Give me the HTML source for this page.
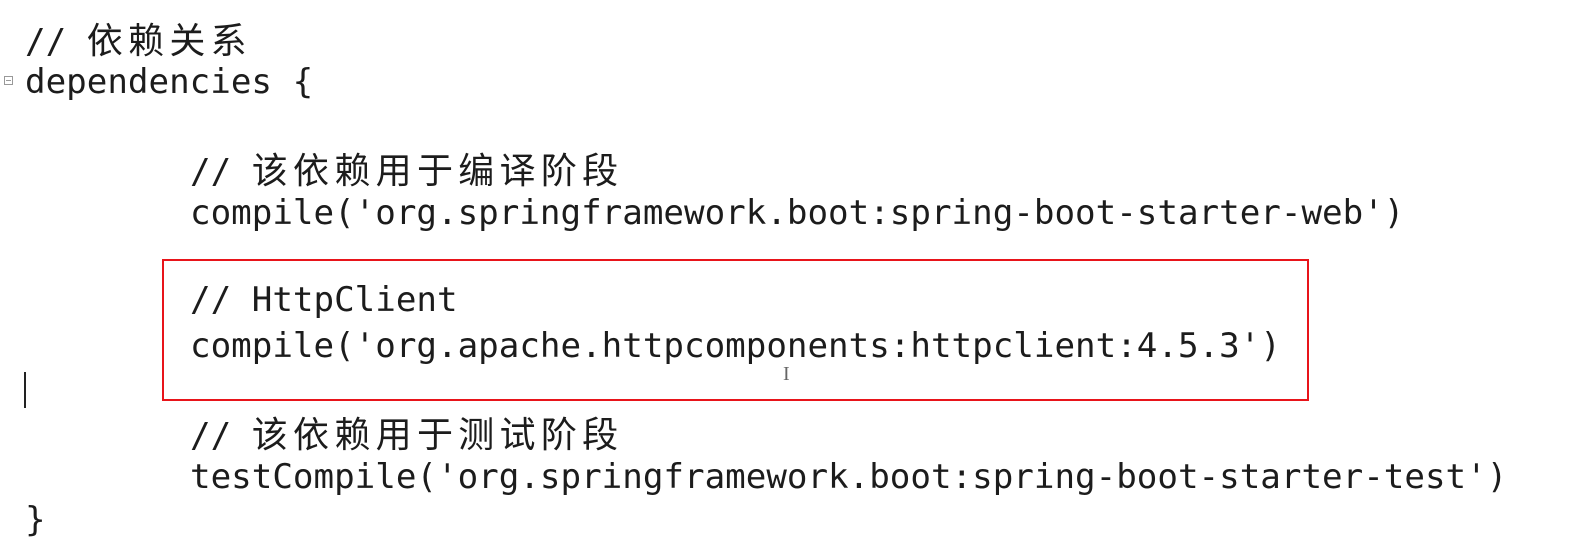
<!DOCTYPE html>
<html><head><meta charset="utf-8"><style>
html,body{margin:0;padding:0;background:#fff;width:1570px;height:545px;overflow:hidden;position:relative}
.l{position:absolute;white-space:pre;font-family:"DejaVu Sans Mono","Noto Sans CJK SC",monospace;font-size:34.2px;line-height:44px;height:44px;color:#1c1c1c}
.c{font-family:"Noto Sans CJK SC",sans-serif;letter-spacing:5.3px;font-size:36px}
.box{position:absolute;left:162px;top:259px;width:1143px;height:138px;border:2px solid #e8141a}
.cur{position:absolute;left:24px;top:372px;width:2px;height:36px;background:#222}
.fold{position:absolute;left:4px;top:76px;width:9px;height:9px;border:1px solid #999;box-sizing:border-box}
.fold:after{content:"";position:absolute;left:1px;top:3px;width:5px;height:1px;background:#999}
.ib{position:absolute;left:783px;top:363px;width:9px;height:22px;color:#666;font-size:20px;font-family:"Liberation Serif",serif}
</style></head><body>
<div class="l" style="left:25px;top:16px">// <span class="c">依赖关系</span></div>
<div class="fold"></div>
<div class="l" style="left:25px;top:60px">dependencies {</div>
<div class="l" style="left:190px;top:146px">// <span class="c">该依赖用于编译阶段</span></div>
<div class="l" style="left:190px;top:191px">compile('org.springframework.boot:spring-boot-starter-web')</div>
<div class="box"></div>
<div class="l" style="left:190px;top:278px">// HttpClient</div>
<div class="l" style="left:190px;top:324px">compile('org.apache.httpcomponents:httpclient:4.5.3')</div>
<div class="ib">I</div>
<div class="cur"></div>
<div class="l" style="left:190px;top:410px">// <span class="c">该依赖用于测试阶段</span></div>
<div class="l" style="left:190px;top:455px">testCompile('org.springframework.boot:spring-boot-starter-test')</div>
<div class="l" style="left:25px;top:498px">}</div>
</body></html>
